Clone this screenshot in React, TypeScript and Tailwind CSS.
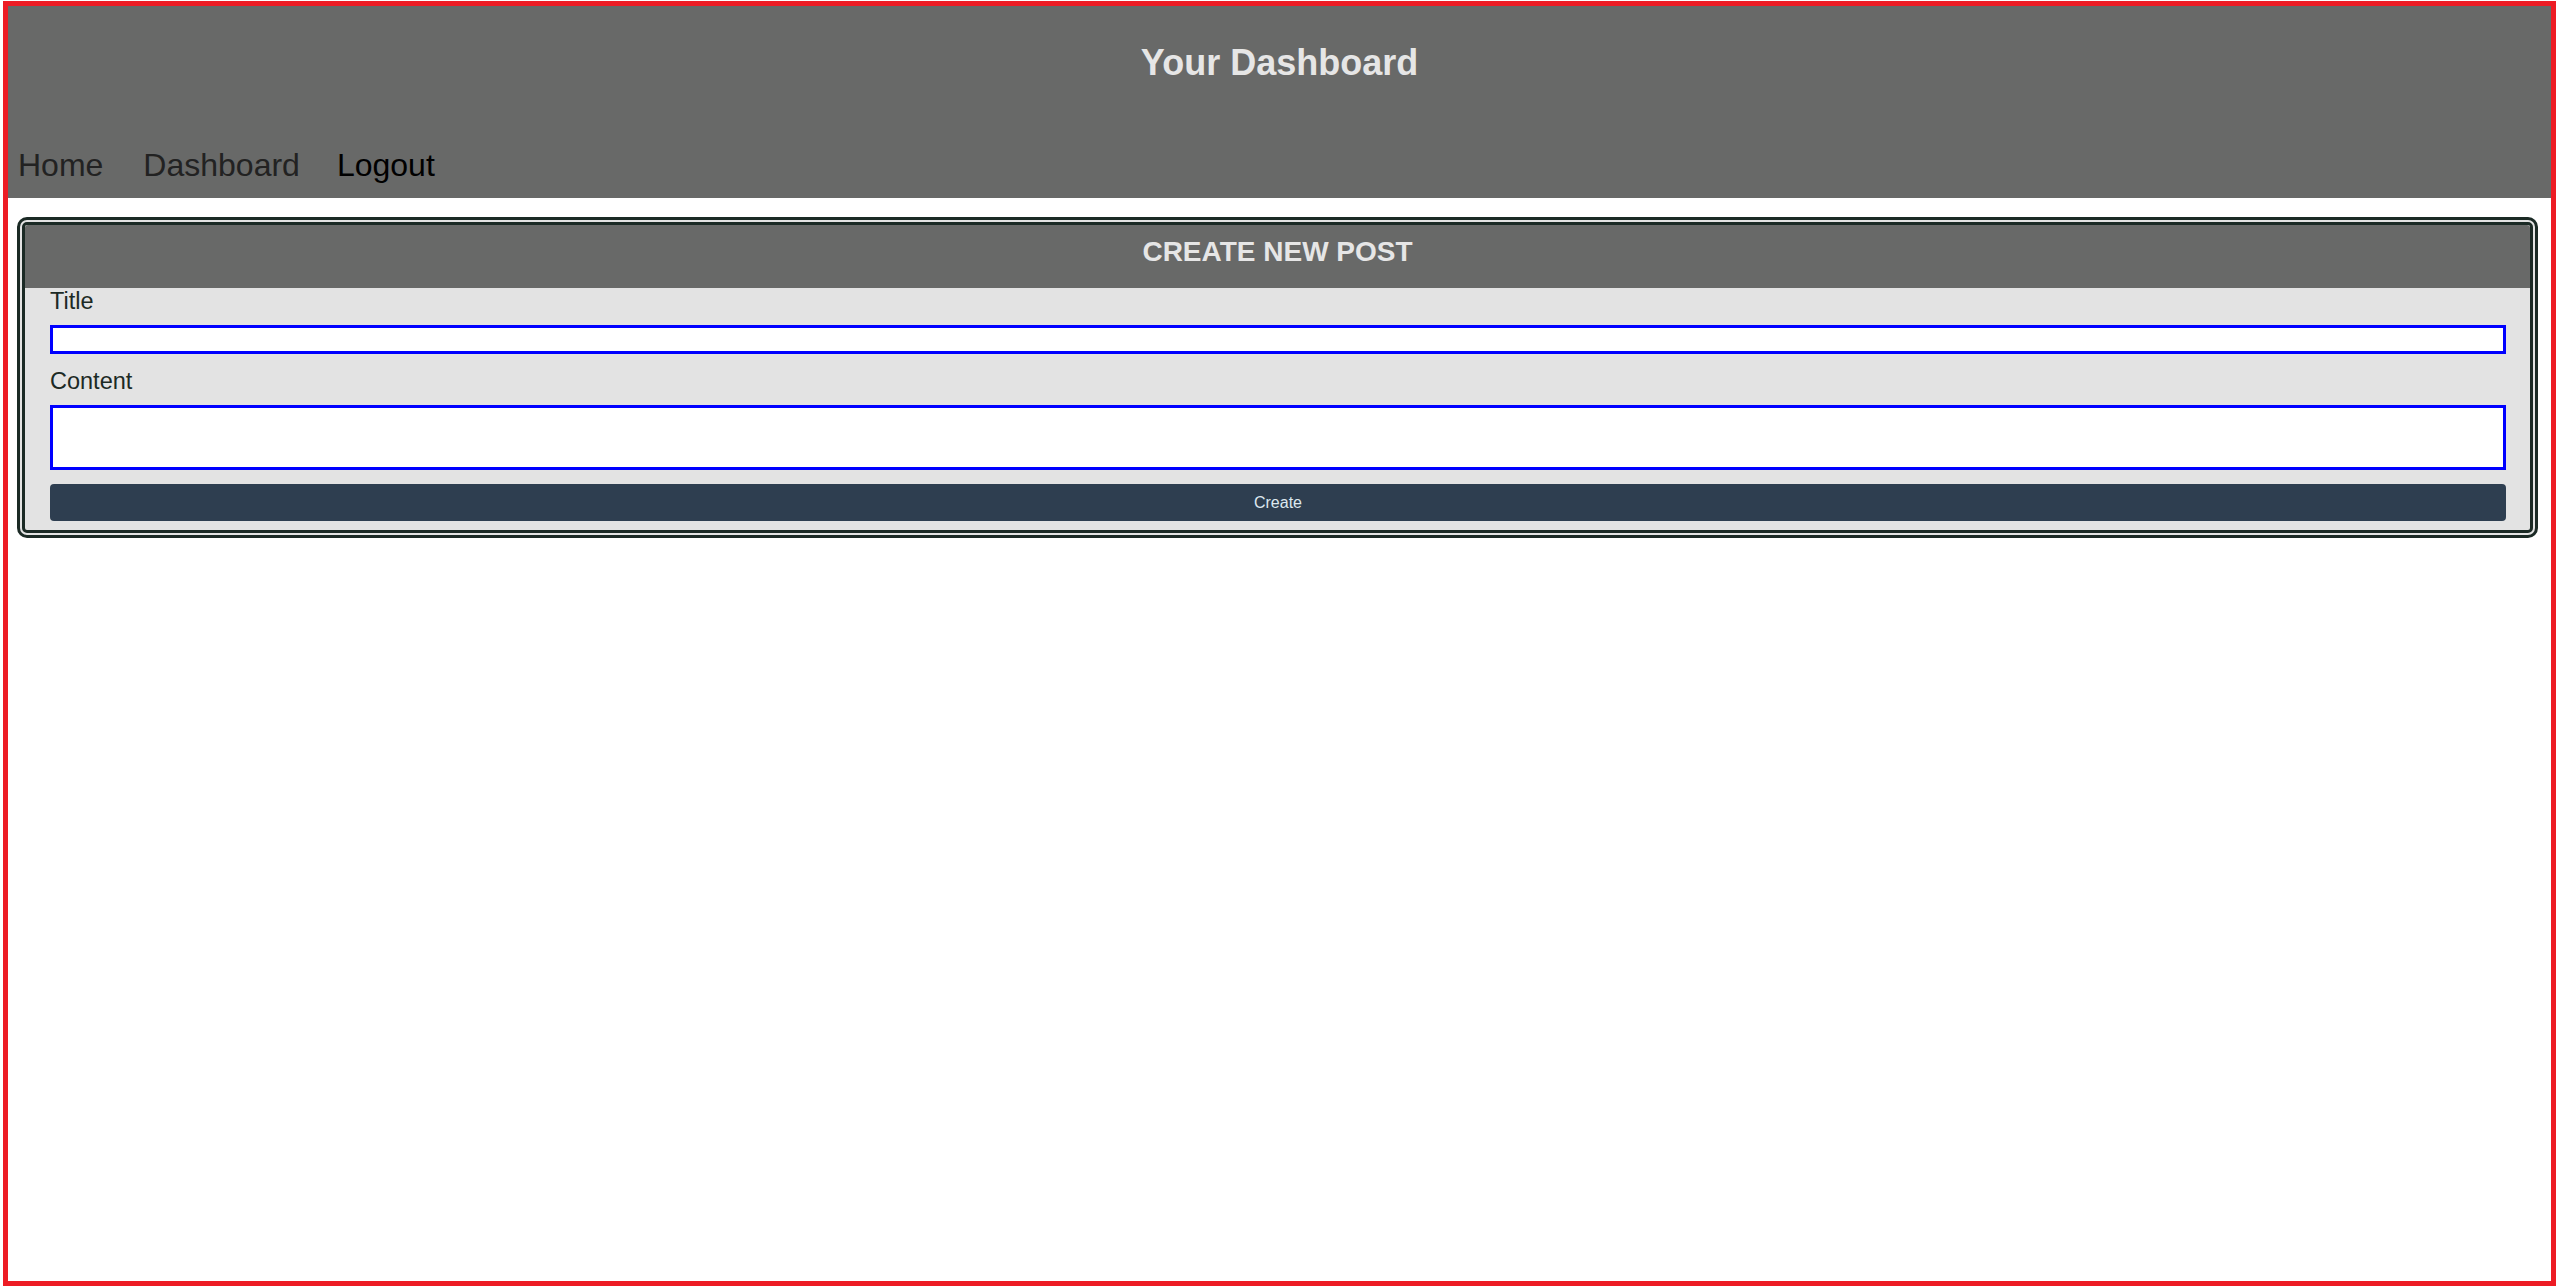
export default function App() {
  return (
    <div className="ml-[3px] mt-[1px] w-[2553px] h-[1285px] border-[5px] border-[#ed1c24] bg-white font-['Liberation_Sans',Arial,sans-serif]">
      {/* Header */}
      <header className="bg-[#686968] pt-[36px] pb-[15px]">
        <h1 className="text-center text-[36px] leading-[41px] font-bold text-[#e6e6e6]">Your Dashboard</h1>
        <nav className="mt-[64px] flex pl-[10px] text-[32px] leading-[36px]">
          <a href="#" className="text-[#222222]">Home</a>
          <a href="#" className="ml-[40px] text-[#222222]">Dashboard</a>
          <a href="#" className="ml-[37px] text-black">Logout</a>
        </nav>
      </header>

      {/* Create post card */}
      <main className="pl-[9px] pr-[13px] pt-[19px]">
        <div className="border-[8px] border-double border-[#1b2a25] rounded-[10px] bg-[#e3e3e3]">
          <div className="h-[63px] pt-[11px] text-center rounded-t-[3px] bg-[#686968] text-[28px] leading-[32px] font-bold text-[#e6e6e6]">
            CREATE NEW POST
          </div>
          <form className="flex flex-col pl-[25px] pr-[24px] pb-[9px] text-[#1c2a25]" onSubmit={e => e.preventDefault()}>
            <label className="text-[23.5px] leading-[27px]">Title</label>
            <input type="text" className="mt-[10px] h-[29px] border-[3px] border-[#0000ff] bg-white outline-none" />
            <label className="mt-[14px] text-[23.5px] leading-[27px]">Content</label>
            <textarea className="mt-[10px] h-[65px] border-[3px] border-[#0000ff] bg-white outline-none resize-none" />
            <button type="submit" className="mt-[14px] h-[37px] rounded-[4px] bg-[#2e3e50] text-[16px] text-[#dde8ef]">
              Create
            </button>
          </form>
        </div>
      </main>
    </div>
  )
}
